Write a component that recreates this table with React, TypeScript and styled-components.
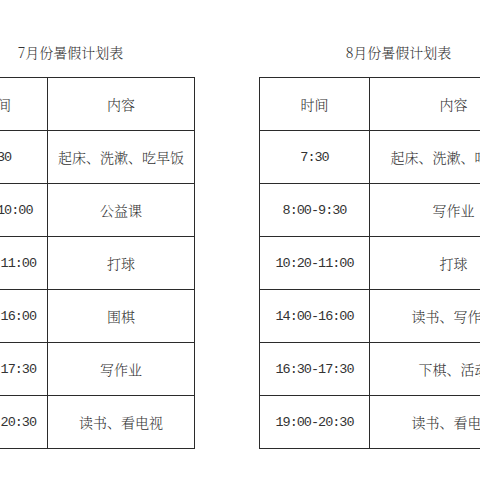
import styled, { createGlobalStyle } from 'styled-components';

const GlobalStyle = createGlobalStyle`
  html, body {
    margin: 0;
    padding: 0;
    background: #ffffff;
    overflow: hidden;
    width: 480px;
    height: 480px;
  }
`;

const cjk = `"Noto Serif CJK SC", "Noto Sans CJK SC", sans-serif`;

type Plan = { title: string; timeWidth: number; contentWidth: number; rows: [string, string][] };

const plans: Plan[] = [
  {
    title: '7月份暑假计划表',
    timeWidth: 101,
    contentWidth: 147,
    rows: [
      ['7:30', '起床、洗漱、吃早饭'],
      ['8:00-10:00', '公益课'],
      ['10:00-11:00', '打球'],
      ['14:00-16:00', '围棋'],
      ['16:30-17:30', '写作业'],
      ['19:00-20:30', '读书、看电视'],
    ],
  },
  {
    title: '8月份暑假计划表',
    timeWidth: 110,
    contentWidth: 168,
    rows: [
      ['7:30', '起床、洗漱、吃早饭'],
      ['8:00-9:30', '写作业'],
      ['10:20-11:00', '打球'],
      ['14:00-16:00', '读书、写作业'],
      ['16:30-17:30', '下棋、活动'],
      ['19:00-20:30', '读书、看电视'],
    ],
  },
];

function App() {
  return (
    <>
      <GlobalStyle />
      <Page>
        {plans.map((plan) => (
          <Panel key={plan.title}>
            <Title>{plan.title}</Title>
            <Sheet $time={plan.timeWidth} $content={plan.contentWidth}>
              <Cell>时间</Cell>
              <Cell>内容</Cell>
              {plan.rows.map(([time, task]) => (
                <Row key={time}>
                  <Cell $mono>{time}</Cell>
                  <Cell>{task}</Cell>
                </Row>
              ))}
            </Sheet>
          </Panel>
        ))}
      </Page>
    </>
  );
}

export default App;

const Page = styled.div`
  display: flex;
  align-items: flex-start;
  gap: 64px;
  margin-left: -54px;
  width: max-content;
`;

const Panel = styled.section`
  display: flex;
  flex-direction: column;
  align-items: center;
`;

const Title = styled.h2`
  margin: 42px 0 15px;
  font-family: ${cjk};
  font-weight: 300;
  font-size: 14px;
  line-height: 20px;
  color: #333333;
`;

const Sheet = styled.div<{ $time: number; $content: number }>`
  display: grid;
  grid-template-columns: ${(p) => p.$time}px ${(p) => p.$content}px;
  border-top: 1px solid #2b2b2b;
  border-left: 1px solid #2b2b2b;
`;

const Row = styled.div`
  display: contents;
`;

const Cell = styled.div<{ $mono?: boolean }>`
  box-sizing: border-box;
  height: 53px;
  display: flex;
  align-items: center;
  justify-content: center;
  border-right: 1px solid #2b2b2b;
  border-bottom: 1px solid #2b2b2b;
  color: #333333;
  font-size: ${(p) => (p.$mono ? '13.5px' : '14px')};
  font-family: ${(p) => (p.$mono ? `"Liberation Mono", monospace` : cjk)};
  font-weight: ${(p) => (p.$mono ? 400 : 300)};
  letter-spacing: ${(p) => (p.$mono ? '-1px' : '0')};
  white-space: nowrap;
`;
